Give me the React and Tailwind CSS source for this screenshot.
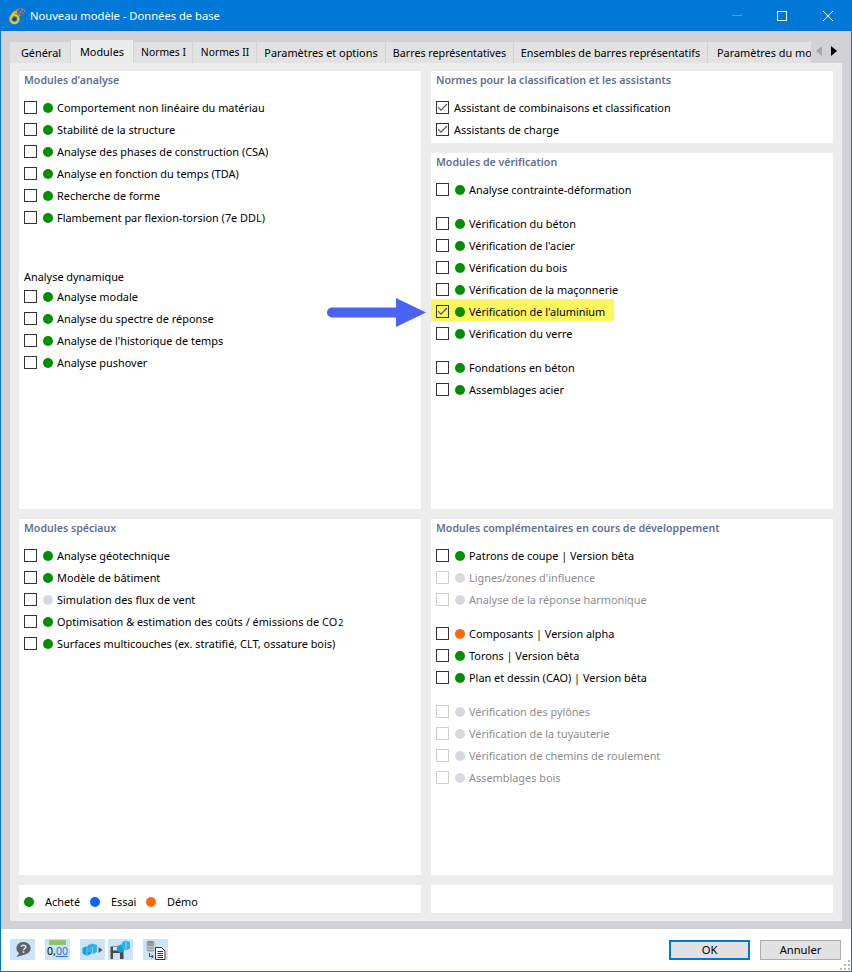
const G = "#008f00", GR = "#d8d8de", O = "#ff6a00", B = "#0a64f5";

function Check({ checked, disabled }) {
  return (
    <span className={`relative block w-[13px] h-[13px] shrink-0 -mt-px border ${disabled ? "border-[#cfcfcf]" : "border-[#333333]"} ${checked ? "" : "bg-white"}`}>
      {checked && (
        <svg className="absolute left-0 top-0" width="11" height="11" viewBox="0 0 11 11" fill="none">
          <path d="M1 5.2 L4 8.2 L10 2" stroke="#555555" strokeWidth="1.2" />
        </svg>
      )}
    </span>
  );
}

function Row({ label, dot = G, checked, disabled, nodot, children }) {
  return (
    <div className="relative flex items-center h-[22px] pl-[5px]">
      <Check checked={checked} disabled={disabled} />
      {!nodot && <span className="ml-[6px] w-[10px] h-[10px] rounded-full shrink-0" style={{ background: dot }} />}
      <span className={`${nodot ? "ml-[5px]" : "ml-[4px]"} whitespace-nowrap ${disabled ? "text-[#8d8d8d]" : "text-black"}`}>{children || label}</span>
    </div>
  );
}

function Panel({ title, className = "", children }) {
  return (
    <div className={`bg-white ${className}`}>
      <div className="h-[18px] pl-[5px] leading-[18px] text-[10.6px] font-semibold text-[#5f6f93] whitespace-nowrap">{title}</div>
      {children}
    </div>
  );
}

const tabs = [
  ["Général", 61, "pl-[2px]"], ["Modules", 63, ""], ["Normes I", 59, "text-[10.3px] pl-[1px]"], ["Normes II", 64, "text-[10.3px] pl-[1px]"], ["Paramètres et options", 129, ""],
  ["Barres représentatives", 128, "text-[10.7px]"], ["Ensembles de barres représentatifs", 194, "text-[10.8px]"],
];

function Arrow() {
  return (
    <svg className="absolute left-[326px] top-[297px]" width="100" height="31" viewBox="0 0 100 31">
      <path d="M5 10.5 H69 V1 L99 15.5 L69 30 V20.5 H5 A5 5 0 0 1 5 10.5 Z" fill="#4a63f5" />
    </svg>
  );
}

function ToolBtn({ children, className = "" }) {
  return <div className={`w-[25px] h-[21px] bg-[#cce4f7] flex items-center justify-center ${className}`}>{children}</div>;
}

function Grip() {
  return (
    <svg className="absolute right-0 bottom-0" width="12" height="11" viewBox="0 0 12 11" fill="#b8b8b8">
      <rect x="9" y="0" width="2" height="2" />
      <rect x="5" y="4" width="2" height="2" />
      <rect x="9" y="4" width="2" height="2" />
      <rect x="1" y="8" width="2" height="2" />
      <rect x="5" y="8" width="2" height="2" />
      <rect x="9" y="8" width="2" height="2" />
    </svg>
  );
}

export default function App() {
  return (
    <div className="relative w-[852px] h-[972px] bg-white border-x border-b border-[#0078d7] text-[10.9px] overflow-hidden" style={{ fontFamily: '"Noto Sans", sans-serif' }}>
      <div className="h-[31px] bg-[#0078d7] flex items-center text-white -mx-px">
        <svg className="ml-[9px] mt-[1px]" width="18" height="18" viewBox="0 0 18 18">
          <path d="M5 3 L12 0.500 L17 4 L12 9 L7 8 Z" fill="#7f8aa3" />
          <path d="M6 3 L14 8 M9 2 L16 6 M12 1 L8 8 M15 3 L11 8" stroke="#3d4a66" strokeWidth="0.700" />
          <circle cx="5.500" cy="12" r="4" fill="none" stroke="#f0c020" strokeWidth="2.400" />
          <path d="M2.500 11 C2.500 7 5 5 8 4.500" fill="none" stroke="#f0c020" strokeWidth="2.200" />
          <circle cx="5.500" cy="12" r="1.600" fill="#4a3a10" />
        </svg>
        <span className="ml-[3px] text-[11.2px] pt-px">Nouveau modèle - Données de base</span>
        <div className="ml-auto flex items-center">
          <span className="w-[10px] h-px bg-[#4da3e6] mr-[35px]" />
          <span className="w-[10px] h-[10px] border border-white mr-[36px]" />
          <svg className="mr-[19px]" width="10" height="10" viewBox="0 0 10 10" stroke="white" strokeWidth="1" fill="none"><path d="M0 0 L10 10 M10 0 L0 10" /></svg>
        </div>
      </div>

      <div className="h-[898px] bg-[#d2d1d6] pl-[9px] pr-[9px] pt-[9px]">
        <div className="relative flex h-[23px]">
          {tabs.map(([t, w, c], i) => (
            <div key={t} style={{ width: w }} className={`flex items-center justify-center whitespace-nowrap border-r border-[#d2d1d6] pt-px ${c} ${i === 1 ? "bg-[#ececec] h-[23px] pt-[3px]" : "bg-[#e2e2e2] h-[21px] mt-[2px]"}`}>{t}</div>
          ))}
          <div className="w-[103px] h-[21px] mt-[2px] overflow-hidden bg-[#e2e2e2] pl-[9px] leading-[22px] whitespace-nowrap">Paramètres du mod</div>
          <div className="absolute right-0 top-0 h-[23px] w-[31px] bg-[#d2d1d6] flex items-center justify-center gap-[9px] pb-[1px]">
            <span className="w-0 h-0 border-y-[5px] border-y-transparent border-r-[6px] border-r-[#a8a8a8]" />
            <span className="w-0 h-0 border-y-[5px] border-y-transparent border-l-[6px] border-l-black" />
          </div>
        </div>
        <div className="h-[858px] bg-[#ececec] p-[9px] pt-[8px] grid grid-cols-[402px_402px] gap-x-[10px] grid-rows-[438px_356px_28px] gap-y-[10px]">
          <Panel title="Modules d'analyse">
            <div className="mt-[8px]">
              <Row label="Comportement non linéaire du matériau" />
              <Row label="Stabilité de la structure" />
              <Row label="Analyse des phases de construction (CSA)" />
              <Row label="Analyse en fonction du temps (TDA)" />
              <Row label="Recherche de forme" />
              <Row label="Flambement par flexion-torsion (7e DDL)" />
            </div>
            <div className="mt-[39px] h-[18px] pl-[5px] leading-[18px]">Analyse dynamique</div>
            <Row label="Analyse modale" />
            <Row label="Analyse du spectre de réponse" />
            <Row label="Analyse de l'historique de temps" />
            <Row label="Analyse pushover" />
          </Panel>

          <div className="flex flex-col gap-[10px]">
            <Panel title="Normes pour la classification et les assistants" className="h-[72px]">
              <div className="mt-[8px]">
                <Row checked nodot label="Assistant de combinaisons et classification" />
                <Row checked nodot label="Assistants de charge" />
              </div>
            </Panel>
            <Panel title="Modules de vérification" className="flex-1">
              <div className="mt-[8px]"><Row label="Analyse contrainte-déformation" /></div>
              <div className="mt-[12px]">
                <Row label="Vérification du béton" />
                <Row label="Vérification de l'acier" />
                <Row label="Vérification du bois" />
                <Row label="Vérification de la maçonnerie" />
                <div className="relative">
                  <span className="absolute left-0 -top-[2px] w-[183px] h-[22px] bg-[#fdf65c]" />
                  <Row checked label="Vérification de l'aluminium" />
                </div>
                <Row label="Vérification du verre" />
              </div>
              <div className="mt-[12px]">
                <Row label="Fondations en béton" />
                <Row label="Assemblages acier" />
              </div>
            </Panel>
          </div>

          <Panel title="Modules spéciaux">
            <div className="mt-[8px]">
              <Row label="Analyse géotechnique" />
              <Row label="Modèle de bâtiment" />
              <Row dot={GR} label="Simulation des flux de vent" />
              <Row>Optimisation &amp; estimation des coûts / émissions de CO<span className="text-[9px] ml-px">2</span></Row>
              <Row label="Surfaces multicouches (ex. stratifié, CLT, ossature bois)" />
            </div>
          </Panel>

          <Panel title="Modules complémentaires en cours de développement">
            <div className="mt-[8px]">
              <Row label="Patrons de coupe | Version bêta" />
              <Row disabled dot={GR} label="Lignes/zones d'influence" />
              <Row disabled dot={GR} label="Analyse de la réponse harmonique" />
            </div>
            <div className="mt-[12px]">
              <Row dot={O} label="Composants | Version alpha" />
              <Row label="Torons | Version bêta" />
              <Row label="Plan et dessin (CAO) | Version bêta" />
            </div>
            <div className="mt-[12px]">
              <Row disabled dot={GR} label="Vérification des pylônes" />
              <Row disabled dot={GR} label="Vérification de la tuyauterie" />
              <Row disabled dot={GR} label="Vérification de chemins de roulement" />
              <Row disabled dot={GR} label="Assemblages bois" />
            </div>
          </Panel>

          <div className="bg-white flex items-center pl-[5px] pt-[6px]">
            <span className="w-[10px] h-[10px] rounded-full" style={{ background: G }} />
            <span className="ml-[11px] w-[35px]">Acheté</span>
            <span className="ml-[10px] w-[10px] h-[10px] rounded-full" style={{ background: B }} />
            <span className="ml-[11px] w-[25px]">Essai</span>
            <span className="ml-[10px] w-[10px] h-[10px] rounded-full" style={{ background: O }} />
            <span className="ml-[11px]">Démo</span>
          </div>
          <div className="bg-white" />
        </div>
      </div>

      <div className="flex items-start pl-[9px] pr-[10px] pt-[10px]">
        <ToolBtn>
          <svg width="17" height="17" viewBox="0 0 17 17">
            <path d="M9.500 1 a6.800 6.300 0 0 1 1.500 12.500 L2.500 16 L5 12.200 A6.800 6.300 0 0 1 9.500 1Z" fill="#5c6468" />
            <path d="M7.300 5.800 C7.500 3.800 11.800 3.800 11.800 6 C11.800 7.600 9.500 7.600 9.500 9.300" fill="none" stroke="#cce4f7" strokeWidth="1.600" />
            <rect x="8.700" y="10.200" width="1.700" height="1.700" fill="#cce4f7" />
          </svg>
        </ToolBtn>
        <ToolBtn className="ml-[10px]">
          <div className="flex flex-col items-center">
            <span className="block w-[17px] h-[5px] bg-[#8fc56a] -mt-[1px]" />
            <span className="text-[10.500px] text-black leading-[13px]">0,<span className="text-[#2a6fc9] underline">00</span></span>
          </div>
        </ToolBtn>
        <ToolBtn className="ml-[10px]">
          <svg width="21" height="14" viewBox="0 0 21 14">
            <path d="M0.500 5 L5 3 L9.500 5 V10.500 L5 13 L0.500 10.500 Z" fill="#12a0d8" />
            <path d="M6 2 L10.500 0.500 L15 2 V9 L11 11 L6 9 Z" fill="#2fb3e3" />
            <path d="M5 3 V13 M10.500 4 V11" stroke="#cce4f7" strokeWidth="0.600" />
            <path d="M16.500 4 L20.500 7 L16.500 10 Z" fill="#555555" />
          </svg>
        </ToolBtn>
        <ToolBtn className="ml-[3px]">
          <svg width="21" height="20" viewBox="0 0 21 20">
            <path d="M0.500 6.500 H11 L13.500 9 V19 H0.500 Z" fill="#454a4e" />
            <rect x="3" y="7" width="5.500" height="3.500" fill="#cce4f7" />
            <rect x="3" y="13" width="7" height="6" fill="#cce4f7" />
            <path d="M7 6 L11 4.500 L14 6 V11 L11 13 L7 11 Z" fill="#12a0d8" />
            <path d="M12 2 L16 0.500 L20 2 V8.500 L16 10.500 L12 8.500 Z" fill="#2fb3e3" />
            <path d="M16 1 V10" stroke="#cce4f7" strokeWidth="0.600" />
          </svg>
        </ToolBtn>
        <ToolBtn className="ml-[10px]">
          <svg width="21" height="20" viewBox="0 0 21 20" fill="none">
            <ellipse cx="5.500" cy="2.500" rx="3.800" ry="1.800" fill="#8a8a8a" />
            <path d="M1.700 2.500 V10 C1.700 12 9.300 12 9.300 10 V2.500" fill="#9a9a9a" />
            <path d="M1.700 5.500 C1.700 7.500 9.300 7.500 9.300 5.500 M1.700 8 C1.700 10 9.300 10 9.300 8" stroke="#cce4f7" strokeWidth="0.800" />
            <path d="M4.500 13 V16.500 H8 M6.500 14.800 L8.300 16.500 L6.500 18.200" stroke="#444444" />
            <path d="M10.500 7.500 H16.500 L20 11 V19.500 H10.500 Z" fill="white" stroke="#333333" />
            <path d="M12.500 11.500 H18 M12.500 13.500 H18 M12.500 15.500 H18 M12.500 17.500 H18" stroke="#333333" />
          </svg>
        </ToolBtn>
        <div className="ml-auto flex gap-[10px] pt-px">
          <div className="w-[81px] h-[20px] border-2 border-[#0078d7] bg-[#e1e1e1] flex items-center justify-center text-[11.2px] pt-px">OK</div>
          <div className="w-[81px] h-[20px] border border-[#adadad] bg-[#e1e1e1] flex items-center justify-center text-[11.2px] pt-px">Annuler</div>
        </div>
      </div>

      <Grip />
      <Arrow />
    </div>
  );
}
